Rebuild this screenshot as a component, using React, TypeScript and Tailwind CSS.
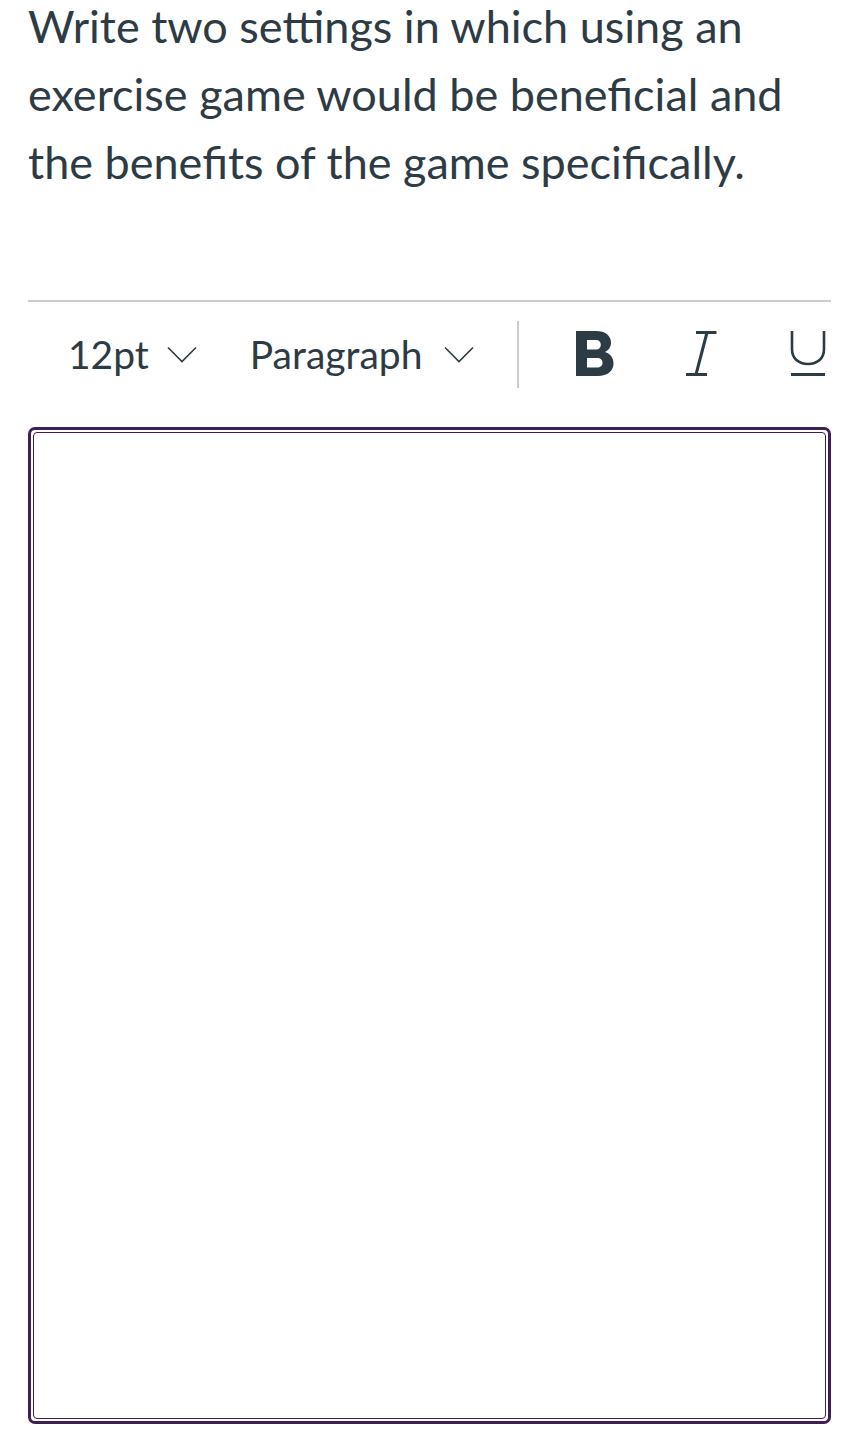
function Chevron() {
  return (
    <svg width="30" height="17" viewBox="0 0 30 17" fill="none" className="shrink-0">
      <path d="M1 1.5l14 14 14-14" stroke="#2d3b45" strokeWidth="1.6" />
    </svg>
  );
}

function BoldIcon() {
  return (
    <svg width="38" height="46" viewBox="0 0 38 46" fill="none" className="shrink-0">
      <path
        fillRule="evenodd"
        d="M0 0h20c9.5 0 15 4.8 15 11.5 0 4.5-2.5 8-6 9.5 5 1.5 8.5 5.5 8.5 11.5C37.5 40 31.5 45 22 45H0V0zm11 9v9.5h9c3 0 4.8-2 4.8-4.8S23 9 20 9h-9zm0 18v9.5h10c3.5 0 5.5-2 5.5-4.8S24.5 27 21 27H11z"
        fill="#2d3b45"
      />
    </svg>
  );
}

function ItalicIcon() {
  return (
    <svg width="31" height="46" viewBox="0 0 31 46" fill="none">
      <path d="M10 1.5h20.5M0 43.5h21M21 1.5L10 43.5" stroke="#2d3b45" strokeWidth="3" />
    </svg>
  );
}

function UnderlineIcon() {
  return (
    <svg width="38" height="46" viewBox="0 0 38 46" fill="none">
      <path d="M3 0v18c0 9.5 6.5 15 16 15s16-5.5 16-15V0" stroke="#2d3b45" strokeWidth="2.6" />
      <path d="M2 43.5h34" stroke="#2d3b45" strokeWidth="3" />
    </svg>
  );
}

export default function App() {
  return (
    <div
      className="min-h-[1450px] bg-white pl-[28px] pr-[12px] text-[#2d3b45]"
      style={{ fontFamily: 'Lato, "Liberation Sans", sans-serif' }}
    >
      <p className="-mt-[8px] text-[45px] leading-[68px]">
        Write two settings in which using an exercise game would be beneficial and the benefits of the game specifically.
      </p>

      <div className="mt-[104px] h-[2px] bg-[#c7cdd1]" />

      <div className="mt-[7px] flex h-[90px] items-center pl-[40px]">
        <div className="flex shrink-0 items-center gap-[18px] text-[39px]">
          <span>12pt</span>
          <Chevron />
        </div>
        <div className="ml-[53px] flex shrink-0 items-center gap-[22px] text-[39px]">
          <span>Paragraph</span>
          <Chevron />
        </div>
        <div className="ml-[43px] h-[67px] w-[2px] shrink-0 bg-[#c7cdd1]" />
        <div className="ml-[57px] flex shrink-0 items-center">
          <BoldIcon />
          <div className="ml-[72px] shrink-0">
            <ItalicIcon />
          </div>
          <div className="ml-[72px] shrink-0">
            <UnderlineIcon />
          </div>
        </div>
      </div>

      <div className="mt-[28px] h-[997px] rounded-[7px] border-[3px] border-[#3e1f54] p-[2px]">
        <div className="h-full rounded-[4px] border border-[#3e1f54]" />
      </div>
    </div>
  );
}
